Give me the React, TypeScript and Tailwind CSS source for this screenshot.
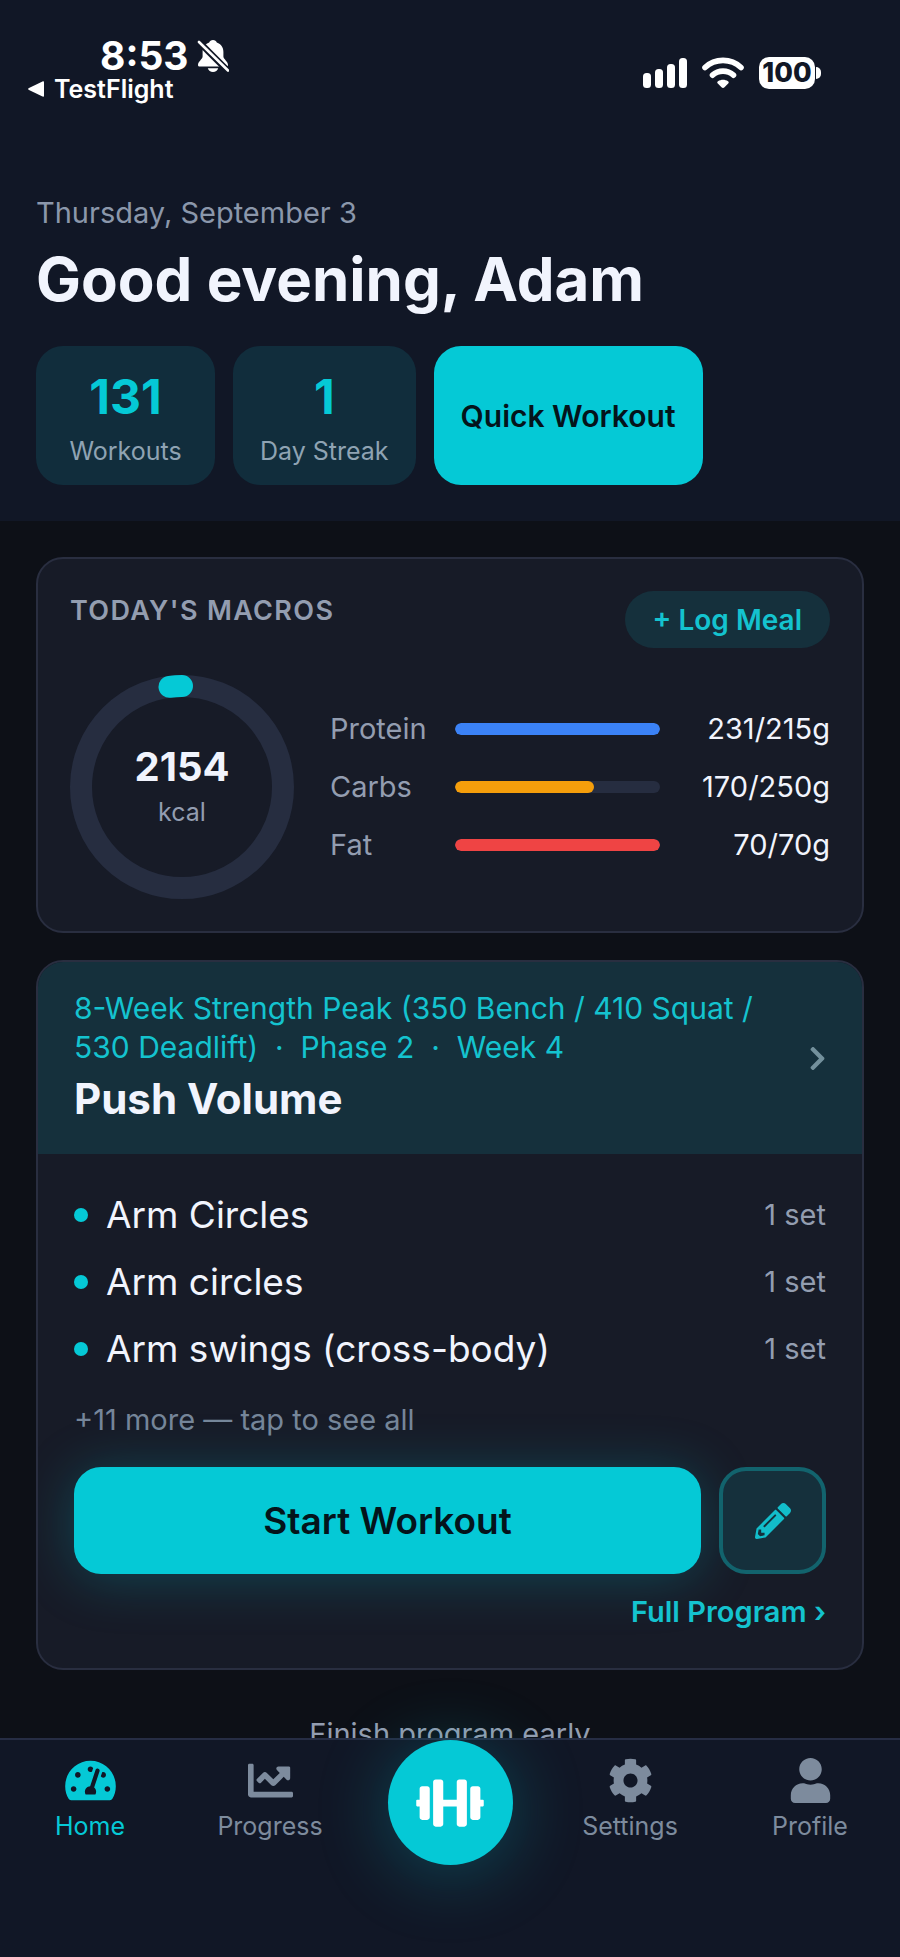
import {
    FaChartLine,
    FaChevronRight,
    FaCog,
    FaDumbbell,
    FaPencilAlt,
    FaTachometerAlt,
    FaUser,
} from 'react-icons/fa';
import type { IconType } from 'react-icons';
import clsx from 'clsx';

interface Macro {
    name: string;
    current: number;
    goal: number;
    color: string;
}

interface Exercise {
    name: string;
    sets: string;
}

const MACROS: Macro[] = [
    { name: 'Protein', current: 231, goal: 215, color: 'bg-[#3b82f6]' },
    { name: 'Carbs', current: 170, goal: 250, color: 'bg-[#f59e0b]' },
    { name: 'Fat', current: 70, goal: 70, color: 'bg-[#ef4444]' },
];

const EXERCISES: Exercise[] = [
    { name: 'Arm Circles', sets: '1 set' },
    { name: 'Arm circles', sets: '1 set' },
    { name: 'Arm swings (cross-body)', sets: '1 set' },
];

function BellSlash() {
    return (
        <svg width="32" height="34" viewBox="0 0 32 34" aria-hidden="true">
            <path
                fill="#fff"
                d="M16 1c-1.900 0-3.300 1-3.800 2.500C7.700 5 5.600 8.500 5.600 13v4.500c0 2.500-4.600 5-4.600 8.500 0 1 .8 1.600 1.800 1.600h26.400c1 0 1.800-.6 1.800-1.600 0-3.500-4.600-6-4.600-8.500V13c0-4.500-2.100-8-6.600-9.500C19.300 2 17.900 1 16 1zM10.800 29.200c.6 2.400 2.700 3.800 5.200 3.800s4.600-1.400 5.200-3.800z"
            />
            <path d="M2 3l29 29" stroke="#111726" strokeWidth="6.500" />
            <path d="M2 3l29 28.500" stroke="#fff" strokeWidth="2.600" strokeLinecap="round" />
        </svg>
    );
}

function SignalBars() {
    return (
        <svg width="44" height="31" viewBox="0 0 44 31" fill="#fff" aria-hidden="true">
            <rect x="0" y="15" width="8" height="15" rx="3.500" />
            <rect x="12" y="11" width="8" height="19" rx="3.500" />
            <rect x="24" y="6" width="8" height="24" rx="3.500" />
            <rect x="36" y="0" width="8" height="30" rx="3.500" />
        </svg>
    );
}

function Wifi() {
    return (
        <svg width="42" height="32" viewBox="0 0 42 32" fill="none" stroke="#fff" aria-hidden="true">
            <path d="M3 10.500C13 1 29 1 39 10.500" strokeWidth="5.600" strokeLinecap="round" />
            <path d="M10.500 18.200c6-5.400 15-5.400 21 0" strokeWidth="5.600" strokeLinecap="round" />
            <path
                d="M21 31c-.6 0-1-.3-1.500-.8l-3.700-3.700c-.8-.8-.7-1.700.2-2.300 3-2 7-2 10 0 .9.6 1 1.500.2 2.300l-3.700 3.700c-.5.5-.9.8-1.500.8z"
                fill="#fff"
                stroke="none"
            />
        </svg>
    );
}

function StatusBar() {
    return (
        <div className="flex items-center justify-between pl-7 pr-[79px] pt-[34px] text-white">
            <div>
                <div className="flex h-11 items-center gap-2 pl-[72px]">
                    <span className="text-[39px] font-bold leading-[44px]">8:53</span>
                    <BellSlash />
                </div>
                <a href="#testflight" className="flex h-[22px] items-center gap-2.5 text-[25px] font-semibold leading-[22px]">
                    <svg width="16" height="16" viewBox="0 0 16 16" fill="#fff" aria-hidden="true">
                        <path d="M14.500.4C15.500 0 16 .6 16 1.500v13c0 .9-.5 1.500-1.500 1.100L1 9c-1.200-.6-1.200-1.400 0-2z" />
                    </svg>
                    TestFlight
                </a>
            </div>
            <div className="flex items-center gap-[15px] pt-3">
                <SignalBars />
                <Wifi />
                <div className="flex items-center gap-px">
                    <span className="flex h-8 w-14 items-center justify-center rounded-[10px] bg-white text-[27px] font-extrabold text-[#111726]">
                        100
                    </span>
                    <span className="h-3 w-[5px] rounded-r-full bg-white" />
                </div>
            </div>
        </div>
    );
}

function StatPill({ value, label }: { value: string; label: string }) {
    return (
        <div className="flex min-w-[179px] flex-col items-center rounded-[27px] bg-[#112d3c] px-[27px] pb-3.5 pt-[22px]">
            <span className="text-[48px] font-bold leading-[58px] text-[#05c9d6]">{value}</span>
            <span className="pt-1.5 text-[25px] leading-[39px] text-[#8fa3b3]">{label}</span>
        </div>
    );
}

function CalorieRing() {
    return (
        <div className="relative size-56 shrink-0">
            <svg viewBox="0 0 224 224" fill="none" strokeWidth="22" aria-hidden="true">
                <circle cx="112" cy="112" r="101" stroke="#262d40" />
                <path d="M112 11A101 101 0 0 0 99.500 11.800" stroke="#05c9d6" strokeLinecap="round" />
            </svg>
            <div className="absolute inset-0 flex flex-col items-center justify-center">
                <span className="text-[40px] font-bold leading-[50px] text-[#f1f4fd]">2154</span>
                <span className="text-[25px] leading-10 text-[#939db0]">kcal</span>
            </div>
        </div>
    );
}

function MacroRow({ macro }: { macro: Macro }) {
    const pct = Math.min(100, (macro.current / macro.goal) * 100);
    return (
        <div className="flex items-center gap-[18px] text-[29px] leading-[40px]">
            <span className="w-[107px] text-[#939db0]">{macro.name}</span>
            <div className="h-3 flex-1 overflow-hidden rounded-full bg-[#262d40]">
                <div className={clsx('h-full rounded-full', macro.color)} style={{ width: `${pct}%` }} />
            </div>
            <span className="w-[152px] text-right text-[#f1f4fd]">
                {macro.current}/{macro.goal}g
            </span>
        </div>
    );
}

function MacrosCard() {
    return (
        <section className="rounded-[27px] border-2 border-[#292e40] bg-[#171b27] p-8">
            <div className="flex items-start justify-between">
                <h2 className="text-[27px] font-semibold leading-[39px] tracking-wider text-[#939db0]">TODAY'S MACROS</h2>
                <button className="h-[57px] rounded-full bg-[#15303c] px-7 text-[28px] font-semibold text-[#14c3cf]">
                    + Log Meal
                </button>
            </div>
            <div className="mt-[27px] flex items-center gap-9">
                <CalorieRing />
                <div className="flex flex-1 flex-col gap-[18px]">
                    {MACROS.map((macro) => (
                        <MacroRow key={macro.name} macro={macro} />
                    ))}
                </div>
            </div>
        </section>
    );
}

function ProgramCard() {
    return (
        <section className="mt-[27px] overflow-hidden rounded-[27px] border-2 border-[#292e40] bg-[#171b27]">
            <a href="#program" className="flex items-center justify-between bg-[#15303c] px-9 py-[27px]">
                <div className="flex-1">
                    <p className="pr-8 text-3xl leading-[39px] text-[#14c3cf]">
                        8-Week Strength Peak (350 Bench / 410 Squat / 530 Deadlift)&nbsp; ·&nbsp; Phase 2&nbsp; ·&nbsp; Week 4
                    </p>
                    <h2 className="mt-1 text-[42px] font-bold leading-[56px] text-[#f1f4fd]">Push Volume</h2>
                </div>
                <FaChevronRight className="h-[27px] w-[17px] text-[#73909c]" />
            </a>

            <div className="px-9 pb-9 pt-[27px]">
                <ul>
                    {EXERCISES.map((exercise) => (
                        <li key={exercise.name} className="flex h-[67px] items-center gap-[18px]">
                            <span className="size-3.5 rounded-full bg-[#05c9d6]" />
                            <span className="flex-1 text-[37px] text-[#f1f4fd]">{exercise.name}</span>
                            <span className="text-[29px] text-[#939db0]">{exercise.sets}</span>
                        </li>
                    ))}
                </ul>
                <p className="pt-[18px] text-[29px] leading-[40px] text-[#76869a]">+11 more — tap to see all</p>

                <div className="mt-[27px] flex gap-[18px]">
                    <button className="h-[107px] flex-1 rounded-[27px] bg-[#05c9d6] text-[37px] font-semibold text-[#04141b] shadow-[0_4px_54px_rgba(5,201,214,0.25)]">
                        Start Workout
                    </button>
                    <button
                        aria-label="Edit workout"
                        className="relative flex size-[107px] items-center justify-center rounded-[27px] border-4 border-[#12636d] bg-[#15303c]"
                    >
                        <FaPencilAlt className="size-9 text-[#12bdca]" />
                    </button>
                </div>
                <div className="relative mt-[18px] flex justify-end">
                    <a href="#full" className="text-[29px] font-semibold leading-[40px] text-[#14c3cf]">
                        Full Program ›
                    </a>
                </div>
            </div>
        </section>
    );
}

function NavItem({ icon: Icon, label, active }: { icon: IconType; label: string; active?: boolean }) {
    return (
        <a
            href={`#${label.toLowerCase()}`}
            className={clsx('flex flex-1 flex-col items-center gap-1.5 pt-[18px]', active ? 'text-[#05c9d6]' : 'text-[#7d8b9d]')}
        >
            <Icon className="h-[45px] w-[51px]" />
            <span className="text-[25px] leading-[34px]">{label}</span>
        </a>
    );
}

function TabBar() {
    return (
        <nav className="relative z-10 flex h-[219px] shrink-0 items-start border-t-2 border-[#262d44] bg-[#111726]">
            <NavItem icon={FaTachometerAlt} label="Home" active />
            <NavItem icon={FaChartLine} label="Progress" />
            <div className="flex flex-1 justify-center">
                <button
                    aria-label="Workout"
                    className="flex size-[125px] items-center justify-center rounded-full bg-[#05c9d6] text-white shadow-[0_8px_72px_rgba(5,201,214,0.28)]"
                >
                    <FaDumbbell className="h-[54px] w-[68px]" />
                </button>
            </div>
            <NavItem icon={FaCog} label="Settings" />
            <NavItem icon={FaUser} label="Profile" />
        </nav>
    );
}

export default function App() {
    return (
        <div className="flex h-screen flex-col overflow-hidden bg-[#0d1017] font-['Inter','Noto_Sans',sans-serif]">
            <main className="min-h-0 flex-1 overflow-y-auto [scrollbar-width:none]">
                <header className="bg-[#111726] pb-9">
                    <StatusBar />
                    <div className="px-9 pt-[93px]">
                        <p className="text-[29px] leading-[40px] text-[#8b97ab]">Thursday, September 3</p>
                        <h1 className="mt-2.5 text-[60px] font-bold leading-[72px] text-[#f1f4fd]">Good evening, Adam</h1>
                        <div className="mt-[31px] flex gap-[18px]">
                            <StatPill value="131" label="Workouts" />
                            <StatPill value="1" label="Day Streak" />
                            <button className="rounded-[27px] bg-[#05c9d6] px-[27px] text-3xl font-semibold text-[#04141b]">
                                Quick Workout
                            </button>
                        </div>
                    </div>
                </header>
                <div className="px-9 pt-9">
                    <MacrosCard />
                    <ProgramCard />
                    <button className="mx-auto mt-11 block text-[29px] leading-[40px] text-[#939db0]">Finish program early</button>
                </div>
            </main>
            <TabBar />
        </div>
    );
}
